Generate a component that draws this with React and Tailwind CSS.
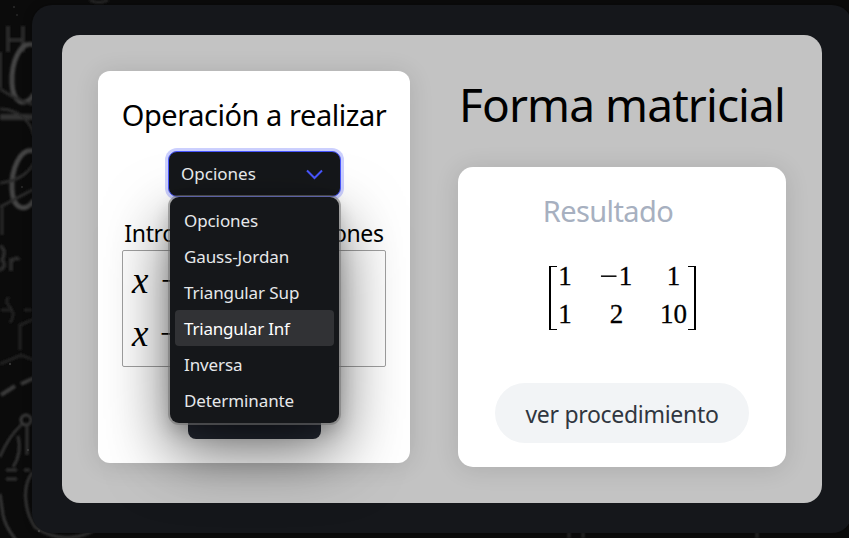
const OPTIONS = ["Opciones", "Gauss-Jordan", "Triangular Sup", "Triangular Inf", "Inversa", "Determinante"];
const CELLS = ["1", "−1", "1", "1", "2", "10"];

function Chalkboard() {
  return (
    <svg className="absolute inset-0" width="849" height="538" fill="none" stroke="#3a3a3a" strokeWidth="3">
      <defs>
        <filter id="soft" x="-10%" y="-10%" width="120%" height="120%">
          <feGaussianBlur stdDeviation="0.8" />
        </filter>
      </defs>
      <g filter="url(#soft)">
        <path d="M8 26V52M23 26V52M8 40H23M0 52V88" stroke="#292929" strokeWidth="4" />
        <path d="M34 45C20 40 11 63 12 83C13 104 26 108 34 94" stroke="#444" strokeWidth="5" />
        <path d="M34 151C20 147 11 170 12 189C13 210 26 213 34 200" stroke="#444" strokeWidth="5" />
        <path d="M0 117H34" stroke="#333" strokeWidth="6" />
        <path d="M0 89C8 94 18 101 34 105M0 109C18 109 31 121 34 136M0 183C18 181 28 174 34 163M0 207L34 189M2 205V235" stroke="#2c2c2c" />
        <path d="M0 246C6 249 4 256 2 260C7 265 2 271 -2 269M11 258V271M11 262C14 257 18 258 19 260" stroke="#2c2c2c" strokeWidth="4" />
        <path d="M1 310H12M9 297C0 305 20 307 10 323M24 310H32M20 350V325L34 319M0 364L21 355L34 360" stroke="#222" />
        <path d="M1 395L15 386M21 384L34 378" strokeWidth="4" />
        <circle cx="26" cy="420" r="5" stroke="#3a3a3a" />
        <path d="M0 457Q8 437 22 424M27 425V455M18 436Q22 454 13 467M6 470H17M6 479H17M24 470H30" stroke="#303030" />
        <path d="M33 472C21 486 25 512 35 527C60 545 86 536 98 528M0 494L3 515C6 529 12 534 16 540" stroke="#343434" />
        <path d="M90 0C95 3 102 3 108 0M569 532V538M583 532V538M757 532V538" stroke="#292929" />
      </g>
      <g fill="#454545" stroke="none">
        <circle cx="14" cy="7" r=".8" /><circle cx="17" cy="15" r=".7" />
        <circle cx="22" cy="187" r=".8" /><circle cx="10" cy="364" r="1" />
        <circle cx="28" cy="450" r="1" /><circle cx="39" cy="531" r="1.2" />
      </g>
    </svg>
  );
}

function OperationSelect() {
  return (
    <div className="relative mt-[15px] h-[46px] w-[173px]">
      <button className="flex h-full w-full items-center justify-between rounded-[9px] border border-[#4856ff] bg-[#15171a] pr-[17px] pl-3 text-[17px] tracking-[0px] text-[#eceff1] shadow-[0_0_0_3px_#ccd0fe]">
        Opciones
        <svg width="17" height="11" viewBox="0 0 17 11" fill="none" stroke="#4856ff" strokeWidth="2">
          <path d="M1 1.5L8.5 9L16 1.5" />
        </svg>
      </button>
      <ul className="absolute top-[46px] left-[2px] z-10 w-[169px] rounded-[9px] bg-[#15171a] px-[5px] pt-[5px] pb-[5px] text-[17px] tracking-[-0.1px] text-[#e6e8ea] shadow-[0_0_0_2px_rgba(115,115,115,0.55),0_28px_64px_rgba(0,0,0,0.6),0_8px_18px_rgba(0,0,0,0.2)]">
        {OPTIONS.map((name) => (
          <li key={name} className={name === "Triangular Inf" ? "h-9 rounded-[4px] bg-[#313235] pl-[9px] leading-[37px] tracking-[-0.2px] text-white" : "h-9 pl-[9px] leading-[37px]"}>
            {name}
          </li>
        ))}
      </ul>
    </div>
  );
}

export default function App() {
  return (
    <div className="relative h-[538px] w-[849px] overflow-hidden bg-[#0b0b0b] font-['Noto_Sans',sans-serif] text-black">
      <Chalkboard />
      <div className="relative mt-[5px] ml-8 h-[528px] w-[820px] rounded-[20px] bg-[#15171b] p-[30px] shadow-[0_0_10px_rgba(0,0,0,0.3)]">
        <main className="flex h-[468px] w-[760px] items-start rounded-[18px] bg-[#c3c3c3] pl-9">
          <section className="mt-9 flex h-[392px] w-[312px] flex-col items-center rounded-xl bg-white pt-[24px] shadow-[0_2px_24px_rgba(0,0,0,0.12)]">
            <h2 className="h-10 text-[29px] leading-10 tracking-[-0.45px] whitespace-nowrap">Operación a realizar</h2>
            <div className="mt-px ml-px"><OperationSelect /></div>
            <p className="mt-[21px] h-[32px] text-[23px] leading-[31px] tracking-[-0.35px] whitespace-nowrap">Introduce las ecuaciones</p>
            <div className="flex h-[117px] w-[264px] flex-col rounded-[2px] border border-[#a0a0a0] px-[9px] pt-[3px] font-['Liberation_Serif',serif] text-[37px] leading-[53px]">
              <div className="whitespace-nowrap"><i className="mr-[3px]">x</i> − <i>y</i> = 1</div>
              <div className="whitespace-nowrap"><i className="mr-[2px]">x</i> − 2<i>y</i> = 10</div>
            </div>
            <button className="mt-6 h-12 w-[133px] rounded-lg bg-[#272c38] pb-3 text-base text-white">Calcular</button>
          </section>
          <section className="ml-12 w-[328px]">
            <h1 className="mt-9 h-[66px] text-center text-[46px] leading-[67px] tracking-[-0.9px] whitespace-nowrap">Forma matricial</h1>
            <div className="mt-[30px] flex h-[300px] flex-col items-center rounded-[15px] bg-white pt-[25px] shadow-[0_2px_24px_rgba(0,0,0,0.12)]">
              <h3 className="mr-[28px] h-10 text-[29px] leading-[38px] tracking-[-0.6px] text-[#a7b0c0]">Resultado</h3>
              <div className="mt-[34px] flex h-[64px] w-[147px] font-['Liberation_Serif',serif] text-[27px]">
                <span className="w-2 border-y border-l-2 border-black" />
                <div className="-mt-[9px] grid flex-1 grid-cols-[17px_86px_28px] grid-rows-[38px_38px] text-center leading-[38px] [-webkit-text-stroke:0.3px_black]">
                  {CELLS.map((value, i) => (
                    <span key={i}>
                      {value.startsWith("−") ? <><span className="mr-[3px] inline-block origin-center scale-x-[1.2]">−</span>{value.slice(1)}</> : value}
                    </span>
                  ))}
                </div>
                <span className="w-2 border-y border-r-2 border-black" />
              </div>
              <button className="mt-[53px] h-[60px] w-[254px] rounded-full bg-[#f2f4f6] pt-[2px] text-[23px] tracking-[-0.3px] whitespace-nowrap text-[#303640]">ver procedimiento</button>
            </div>
          </section>
        </main>
      </div>
    </div>
  );
}
